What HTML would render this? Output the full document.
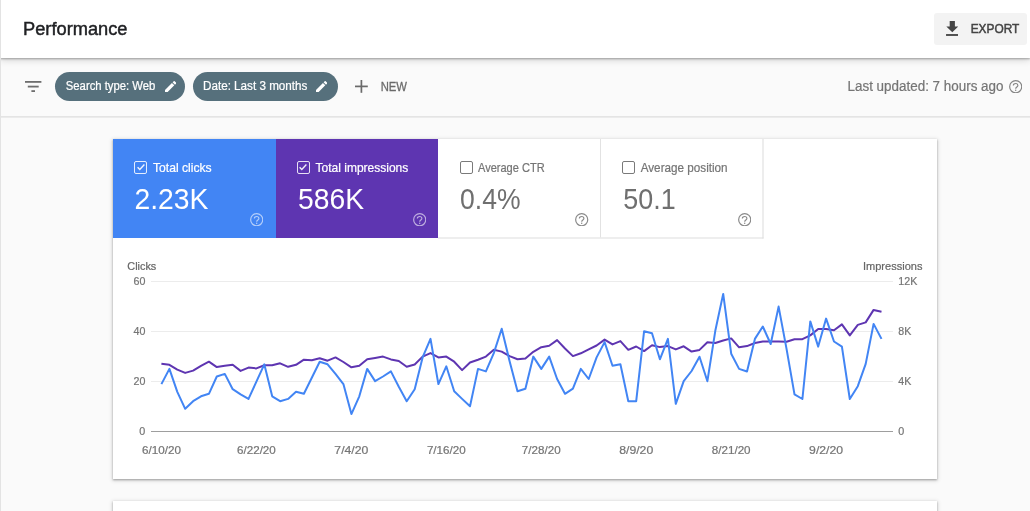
<!DOCTYPE html>
<html><head><meta charset="utf-8">
<style>
*{box-sizing:border-box}
html,body{margin:0;padding:0}
body{width:1030px;height:511px;overflow:hidden;background:#fafafa;font-family:"Liberation Sans",sans-serif;position:relative}
.lb{position:absolute;left:0;top:0;width:1px;height:511px;background:#e3e3e3;z-index:10}
.hdr{position:absolute;z-index:3;left:0;top:0;width:1030px;height:58px;background:#fff;box-shadow:0 1px 2px rgba(0,0,0,.3),0 2px 7px rgba(0,0,0,.16)}
.exp{position:absolute;z-index:4;left:934px;top:13px;width:93px;height:32px;background:#f3f3f3;border-radius:3px}
.tb{position:absolute;left:0;top:58px;width:1030px;height:59px;background:#fafafa}
.chip{position:absolute;top:72px;height:29px;border-radius:15px;background:#56707c}
.card{position:absolute;left:113px;top:139px;width:824px;height:340px;background:#fff;box-shadow:0 1px 2px rgba(0,0,0,.3),0 1px 4px 1px rgba(0,0,0,.12)}
.card2{position:absolute;left:113px;top:501px;width:824px;height:40px;background:#fff;box-shadow:0 1px 2px rgba(0,0,0,.3),0 1px 4px 1px rgba(0,0,0,.12)}
.tile{position:absolute;top:139px;height:99px}
.cb{position:absolute;width:12.8px;height:12.8px;border:1.5px solid;border-radius:2px}
svg{display:block}
</style></head><body>
<div class="hdr"></div>
<div class="exp"></div>
<svg style="position:absolute;z-index:5;left:945.6px;top:20.8px" width="12.6" height="15.4" viewBox="0 0 13 16"><path d="M3.8 0h5.4v5.6h3.5L6.5 11.8 0.3 5.6h3.5z" fill="#444"/><rect x="0" y="13.6" width="13" height="1.9" fill="#444"/></svg>
<div class="tb"></div>
<svg style="position:absolute;left:0;top:0" width="1030" height="130"><line x1="0" y1="116.9" x2="1030" y2="116.9" stroke="#dcdcdc" stroke-width="1.1"/></svg>
<svg style="position:absolute;left:25.2px;top:81.1px" width="16.4" height="11" viewBox="0 0 16.4 11"><rect x="0" y="0" width="16.4" height="1.8" fill="#6e6e6e"/><rect x="2.8" y="4.7" width="10.9" height="1.8" fill="#6e6e6e"/><rect x="6.4" y="9.2" width="3.6" height="1.8" fill="#6e6e6e"/></svg>
<div class="chip" style="left:55px;width:130px"></div>
<div class="chip" style="left:192.5px;width:145px"></div>
<svg style="position:absolute;left:164.6px;top:81px" width="11.3" height="11.3" viewBox="3 3 18 18"><path d="M3 17.25V21h3.75L17.81 9.94l-3.75-3.75L3 17.25zM20.71 7.04a1 1 0 000-1.41l-2.34-2.34a1 1 0 00-1.41 0l-1.83 1.83 3.75 3.75 1.83-1.83z" fill="#fff"/></svg>
<svg style="position:absolute;left:316.2px;top:81px" width="11.3" height="11.3" viewBox="3 3 18 18"><path d="M3 17.25V21h3.75L17.81 9.94l-3.75-3.75L3 17.25zM20.71 7.04a1 1 0 000-1.41l-2.34-2.34a1 1 0 00-1.41 0l-1.83 1.83 3.75 3.75 1.83-1.83z" fill="#fff"/></svg>
<svg style="position:absolute;left:355.4px;top:80.1px" width="12.8" height="12.8" viewBox="0 0 12.8 12.8"><rect x="5.55" y="0" width="1.7" height="12.8" fill="#6a6a6a"/><rect x="0" y="5.55" width="12.8" height="1.7" fill="#6a6a6a"/></svg>
<svg style="position:absolute;left:1008.70px;top:79.70px" width="13.4" height="13.4" viewBox="0 0 13.4 13.4"><circle cx="6.7" cy="6.7" r="6.05" fill="none" stroke="#858585" stroke-width="1.2"/><path d="M4.35 5.5C4.35 4.25 5.4 3.55 6.65 3.55C7.95 3.55 8.9 4.35 8.9 5.5C8.9 6.9 6.7 7.1 6.7 8.7" fill="none" stroke="#858585" stroke-width="1.15"/><circle cx="6.7" cy="10.15" r="0.75" fill="#858585"/></svg>
<div class="card"></div>
<div class="tile" style="left:113px;width:163px;background:#4285f4"></div>
<div class="tile" style="left:276px;width:162px;background:#5e35b1"></div>
<svg style="position:absolute;left:0;top:0" width="1030" height="511"><line x1="438" y1="238" x2="763.5" y2="238" stroke="#dedede" stroke-width="1.1"/><line x1="600.5" y1="139" x2="600.5" y2="237.5" stroke="#e2e2e2" stroke-width="1"/><line x1="763" y1="139" x2="763" y2="238.5" stroke="#dedede" stroke-width="1.1"/></svg>

<div class="cb" style="left:134.3px;top:161.3px;border-color:rgba(255,255,255,.85)"></div>
<div class="cb" style="left:296.9px;top:161.3px;border-color:rgba(255,255,255,.85)"></div>
<div class="cb" style="left:459.8px;top:161.3px;border-color:#7a7a7a"></div>
<div class="cb" style="left:622.2px;top:161.3px;border-color:#7a7a7a"></div>
<svg style="position:absolute;left:135.8px;top:162.4px" width="10" height="10" viewBox="0 0 10 10"><path d="M1.6 5.2l2.2 2.2L8.4 2.6" stroke="rgba(255,255,255,.92)" stroke-width="1.4" fill="none"/></svg>
<svg style="position:absolute;left:298.4px;top:162.4px" width="10" height="10" viewBox="0 0 10 10"><path d="M1.6 5.2l2.2 2.2L8.4 2.6" stroke="rgba(255,255,255,.92)" stroke-width="1.4" fill="none"/></svg>
<svg style="position:absolute;left:249.90px;top:212.50px" width="13.4" height="13.4" viewBox="0 0 13.4 13.4"><circle cx="6.7" cy="6.7" r="6.05" fill="none" stroke="rgba(255,255,255,.6)" stroke-width="1.2"/><path d="M4.35 5.5C4.35 4.25 5.4 3.55 6.65 3.55C7.95 3.55 8.9 4.35 8.9 5.5C8.9 6.9 6.7 7.1 6.7 8.7" fill="none" stroke="rgba(255,255,255,.6)" stroke-width="1.15"/><circle cx="6.7" cy="10.15" r="0.75" fill="rgba(255,255,255,.6)"/></svg><svg style="position:absolute;left:412.60px;top:212.80px" width="13.4" height="13.4" viewBox="0 0 13.4 13.4"><circle cx="6.7" cy="6.7" r="6.05" fill="none" stroke="rgba(255,255,255,.6)" stroke-width="1.2"/><path d="M4.35 5.5C4.35 4.25 5.4 3.55 6.65 3.55C7.95 3.55 8.9 4.35 8.9 5.5C8.9 6.9 6.7 7.1 6.7 8.7" fill="none" stroke="rgba(255,255,255,.6)" stroke-width="1.15"/><circle cx="6.7" cy="10.15" r="0.75" fill="rgba(255,255,255,.6)"/></svg><svg style="position:absolute;left:575.30px;top:212.80px" width="13.4" height="13.4" viewBox="0 0 13.4 13.4"><circle cx="6.7" cy="6.7" r="6.05" fill="none" stroke="#8a8a8a" stroke-width="1.2"/><path d="M4.35 5.5C4.35 4.25 5.4 3.55 6.65 3.55C7.95 3.55 8.9 4.35 8.9 5.5C8.9 6.9 6.7 7.1 6.7 8.7" fill="none" stroke="#8a8a8a" stroke-width="1.15"/><circle cx="6.7" cy="10.15" r="0.75" fill="#8a8a8a"/></svg><svg style="position:absolute;left:737.90px;top:212.80px" width="13.4" height="13.4" viewBox="0 0 13.4 13.4"><circle cx="6.7" cy="6.7" r="6.05" fill="none" stroke="#8a8a8a" stroke-width="1.2"/><path d="M4.35 5.5C4.35 4.25 5.4 3.55 6.65 3.55C7.95 3.55 8.9 4.35 8.9 5.5C8.9 6.9 6.7 7.1 6.7 8.7" fill="none" stroke="#8a8a8a" stroke-width="1.15"/><circle cx="6.7" cy="10.15" r="0.75" fill="#8a8a8a"/></svg>
<div class="card2"></div>
<svg style="position:absolute;z-index:6;left:0;top:0;will-change:transform" width="1030" height="511" viewBox="0 0 1030 511">
  <g stroke="#ececec" stroke-width="1">
    <line x1="151" y1="281.5" x2="893" y2="281.5"/>
    <line x1="151" y1="331.5" x2="893" y2="331.5"/>
    <line x1="151" y1="381.5" x2="893" y2="381.5"/>
  </g>
  <line x1="151" y1="431.5" x2="893" y2="431.5" stroke="#9e9e9e" stroke-width="1"/>
  <polyline points="161.4,363.8 169.4,364.8 177.3,369.6 185.2,372.9 193.1,370.6 201.0,365.8 208.9,361.7 216.8,367.1 224.8,365.8 232.7,364.8 240.6,370.9 248.5,367.6 256.4,368.4 264.3,365.3 272.2,365.3 280.1,363.3 288.1,366.8 296.0,364.8 303.9,359.7 311.8,360.2 319.7,358.2 327.6,360.7 335.5,357.4 343.4,362.0 351.4,367.3 359.3,365.8 367.2,359.2 375.1,357.9 383.0,356.6 390.9,359.4 398.8,361.0 406.7,366.8 414.7,364.5 422.6,356.6 430.5,353.1 438.4,357.4 446.3,356.6 454.2,361.7 462.1,370.1 470.0,362.5 478.0,359.7 485.9,356.6 493.8,349.8 501.7,351.6 509.6,356.1 517.5,359.2 525.4,358.4 533.3,351.8 541.3,347.2 549.2,345.7 557.1,340.1 565.0,348.5 572.9,356.1 580.8,353.3 588.7,349.3 596.6,345.5 604.6,339.6 612.5,344.4 620.4,341.1 628.3,349.8 636.2,346.5 644.1,351.1 652.0,345.3 659.9,347.1 667.9,346.1 675.8,349.4 683.7,346.3 691.6,351.6 699.5,349.9 707.4,342.2 715.3,343.0 723.2,340.5 731.2,338.4 739.1,347.3 747.0,346.1 754.9,343.0 762.8,341.5 770.7,341.5 778.6,341.5 786.5,341.7 794.5,339.2 802.4,339.2 810.3,335.4 818.2,329.0 826.1,329.0 834.0,330.3 841.9,324.4 849.8,335.4 857.8,324.9 865.7,322.4 873.6,309.9 881.5,311.7" fill="none" stroke="#5e35b1" stroke-width="2" stroke-linejoin="round"/>
  <polyline points="161.4,384.1 169.4,368.9 177.3,391.8 185.2,408.8 193.1,401.2 201.0,396.3 208.9,393.8 216.8,376.5 224.8,373.9 232.7,389.2 240.6,394.3 248.5,398.9 256.4,381.6 264.3,364.3 272.2,396.3 280.1,401.2 288.1,398.9 296.0,391.8 303.9,393.8 311.8,377.8 319.7,361.7 327.6,364.3 335.5,373.9 343.4,384.1 351.4,414.1 359.3,396.3 367.2,368.9 375.1,381.1 383.0,376.5 390.9,371.4 398.8,386.7 406.7,401.2 414.7,389.2 422.6,357.4 430.5,338.8 438.4,384.1 446.3,366.3 454.2,391.2 462.1,398.9 470.0,406.3 478.0,368.9 485.9,371.4 493.8,353.1 501.7,328.7 509.6,361.2 517.5,391.2 525.4,388.7 533.3,356.6 541.3,368.9 549.2,356.6 557.1,379.0 565.0,393.8 572.9,388.7 580.8,368.9 588.7,379.0 596.6,357.4 604.6,342.1 612.5,365.8 620.4,364.3 628.3,401.2 636.2,401.2 644.1,331.2 652.0,333.3 659.9,359.3 667.9,338.9 675.8,403.8 683.7,381.2 691.6,371.0 699.5,356.7 707.4,381.2 715.3,330.8 723.2,293.9 731.2,353.7 739.1,368.9 747.0,371.5 754.9,338.9 762.8,326.5 770.7,344.0 778.6,306.6 786.5,348.6 794.5,394.4 802.4,399.0 810.3,321.4 818.2,346.6 826.1,318.6 834.0,341.5 841.9,346.6 849.8,399.0 857.8,386.2 865.7,363.9 873.6,323.9 881.5,338.9" fill="none" stroke="#4285f4" stroke-width="2" stroke-linejoin="round"/>
  <g font-family="Liberation Sans, sans-serif">
<text x="23.00" y="35.00" font-size="18" fill="#202124" stroke="#202124" stroke-width="0.45" textLength="104.50" lengthAdjust="spacingAndGlyphs">Performance</text>
<text x="970.70" y="33.30" font-size="13" fill="#444" stroke="#444" stroke-width="0.5" textLength="48.60" lengthAdjust="spacingAndGlyphs">EXPORT</text>
<text x="65.80" y="90.00" font-size="12" fill="#fff" stroke="#fff" stroke-width="0.22" textLength="89.60" lengthAdjust="spacingAndGlyphs">Search type: Web</text>
<text x="203.00" y="90.00" font-size="12" fill="#fff" stroke="#fff" stroke-width="0.22" textLength="104.40" lengthAdjust="spacingAndGlyphs">Date: Last 3 months</text>
<text x="380.70" y="91.00" font-size="13" fill="#6a6a6a" stroke="#6a6a6a" stroke-width="0.3" textLength="26.30" lengthAdjust="spacingAndGlyphs">NEW</text>
<text x="847.50" y="91.20" font-size="14" fill="#757575" stroke="#757575" stroke-width="0.22" textLength="156.00" lengthAdjust="spacingAndGlyphs">Last updated: 7 hours ago</text>
<text x="153.00" y="172.20" font-size="13" fill="#fff" stroke="#fff" stroke-width="0.22" textLength="58.60" lengthAdjust="spacingAndGlyphs">Total clicks</text>
<text x="134.50" y="209.30" font-size="29.2" fill="#fff" textLength="74.00" lengthAdjust="spacingAndGlyphs">2.23K</text>
<text x="315.50" y="172.20" font-size="13" fill="#fff" stroke="#fff" stroke-width="0.22" textLength="92.80" lengthAdjust="spacingAndGlyphs">Total impressions</text>
<text x="298.00" y="209.30" font-size="29.2" fill="#fff" textLength="66.00" lengthAdjust="spacingAndGlyphs">586K</text>
<text x="478.00" y="172.20" font-size="13" fill="#757575" stroke="#757575" stroke-width="0.22" textLength="66.60" lengthAdjust="spacingAndGlyphs">Average CTR</text>
<text x="460.00" y="209.30" font-size="29.2" fill="#6f6f6f" textLength="60.50" lengthAdjust="spacingAndGlyphs">0.4%</text>
<text x="640.70" y="172.20" font-size="13" fill="#757575" stroke="#757575" stroke-width="0.22" textLength="86.90" lengthAdjust="spacingAndGlyphs">Average position</text>
<text x="623.30" y="209.30" font-size="29.2" fill="#6f6f6f" textLength="52.30" lengthAdjust="spacingAndGlyphs">50.1</text>
<text x="127.30" y="270.20" font-size="11.4" fill="#666" stroke="#666" stroke-width="0.22" textLength="29.00" lengthAdjust="spacingAndGlyphs">Clicks</text>
<text x="863.00" y="270.20" font-size="11.4" fill="#666" stroke="#666" stroke-width="0.22" textLength="59.40" lengthAdjust="spacingAndGlyphs">Impressions</text>
<text x="133.50" y="285.30" font-size="11.3" fill="#757575" stroke="#757575" stroke-width="0.22" textLength="11.90" lengthAdjust="spacingAndGlyphs">60</text>
<text x="133.50" y="335.30" font-size="11.3" fill="#757575" stroke="#757575" stroke-width="0.22" textLength="11.90" lengthAdjust="spacingAndGlyphs">40</text>
<text x="133.50" y="385.30" font-size="11.3" fill="#757575" stroke="#757575" stroke-width="0.22" textLength="11.90" lengthAdjust="spacingAndGlyphs">20</text>
<text x="139.30" y="435.30" font-size="11.3" fill="#757575" stroke="#757575" stroke-width="0.22" textLength="6.00" lengthAdjust="spacingAndGlyphs">0</text>
<text x="898.30" y="285.30" font-size="11.3" fill="#757575" stroke="#757575" stroke-width="0.22" textLength="19.00" lengthAdjust="spacingAndGlyphs">12K</text>
<text x="898.30" y="335.30" font-size="11.3" fill="#757575" stroke="#757575" stroke-width="0.22" textLength="13.00" lengthAdjust="spacingAndGlyphs">8K</text>
<text x="898.30" y="385.30" font-size="11.3" fill="#757575" stroke="#757575" stroke-width="0.22" textLength="13.00" lengthAdjust="spacingAndGlyphs">4K</text>
<text x="898.30" y="435.30" font-size="11.3" fill="#757575" stroke="#757575" stroke-width="0.22" textLength="6.00" lengthAdjust="spacingAndGlyphs">0</text>
<text x="161.45" y="453.90" font-size="11.3" fill="#757575" stroke="#757575" stroke-width="0.22" text-anchor="middle" textLength="38.90" lengthAdjust="spacingAndGlyphs">6/10/20</text>
<text x="256.41" y="453.90" font-size="11.3" fill="#757575" stroke="#757575" stroke-width="0.22" text-anchor="middle" textLength="38.80" lengthAdjust="spacingAndGlyphs">6/22/20</text>
<text x="351.36" y="453.90" font-size="11.3" fill="#757575" stroke="#757575" stroke-width="0.22" text-anchor="middle" textLength="34.00" lengthAdjust="spacingAndGlyphs">7/4/20</text>
<text x="446.32" y="453.90" font-size="11.3" fill="#757575" stroke="#757575" stroke-width="0.22" text-anchor="middle" textLength="38.80" lengthAdjust="spacingAndGlyphs">7/16/20</text>
<text x="541.27" y="453.90" font-size="11.3" fill="#757575" stroke="#757575" stroke-width="0.22" text-anchor="middle" textLength="38.80" lengthAdjust="spacingAndGlyphs">7/28/20</text>
<text x="636.23" y="453.90" font-size="11.3" fill="#757575" stroke="#757575" stroke-width="0.22" text-anchor="middle" textLength="34.00" lengthAdjust="spacingAndGlyphs">8/9/20</text>
<text x="731.19" y="453.90" font-size="11.3" fill="#757575" stroke="#757575" stroke-width="0.22" text-anchor="middle" textLength="38.80" lengthAdjust="spacingAndGlyphs">8/21/20</text>
<text x="826.14" y="453.90" font-size="11.3" fill="#757575" stroke="#757575" stroke-width="0.22" text-anchor="middle" textLength="34.00" lengthAdjust="spacingAndGlyphs">9/2/20</text>
  </g>
</svg>
<div class="lb"></div>
</body></html>
